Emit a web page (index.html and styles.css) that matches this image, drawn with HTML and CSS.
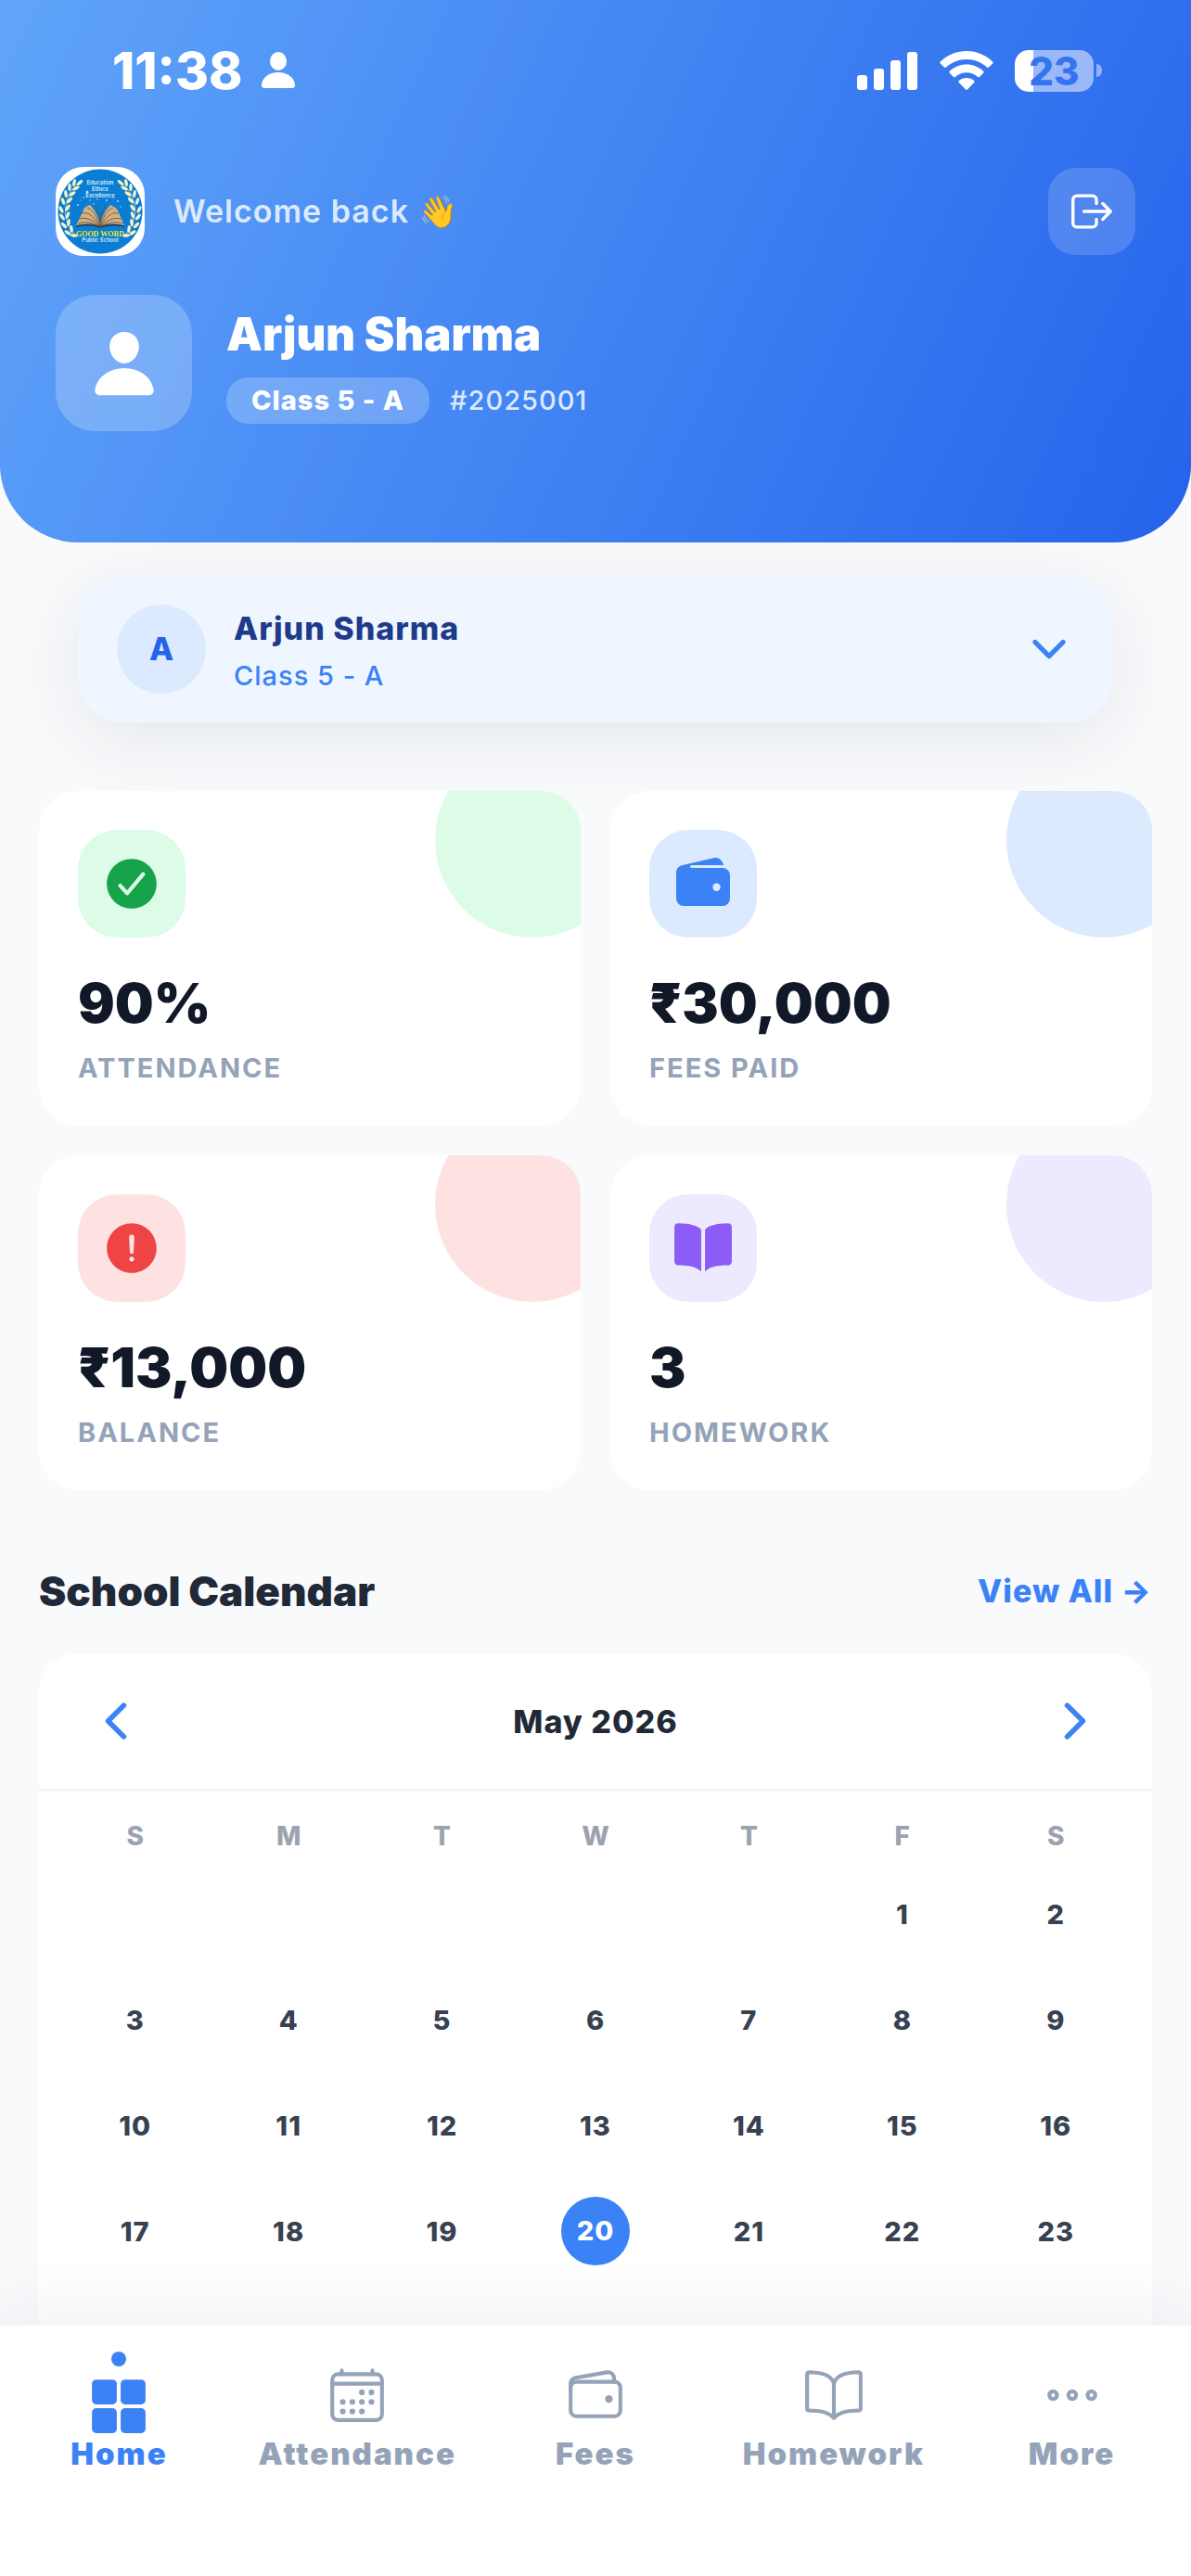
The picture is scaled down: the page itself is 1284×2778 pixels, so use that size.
FILE: index.html
```html
<!DOCTYPE html>
<html lang="en">
<head>
<meta charset="utf-8">
<meta name="viewport" content="width=device-width, initial-scale=1">
<title>Good Word Public School</title>
<link rel="stylesheet" href="styles.css">
</head>
<body>
<div class="app">
  <main class="content">
    <header class="hero">
      <div class="status">
        <div class="status-side">
          <time class="clock">11:38</time>
          <svg class="status-person" viewBox="0 0 36 40" aria-hidden="true"><ellipse cx="18" cy="10" rx="9" ry="10"/><path d="M0 36c0-7 7-14 18-14s18 7 18 14c0 2-1 3-3 3H3c-2 0-3-1-3-3z"/></svg>
        </div>
        <div class="status-side status-icons">
          <svg class="signal" viewBox="0 0 66 42" aria-hidden="true"><rect x="0" y="26" width="11" height="16" rx="3"/><rect x="18" y="19" width="11" height="23" rx="3"/><rect x="36" y="10" width="11" height="32" rx="3"/><rect x="54" y="1" width="11" height="41" rx="3"/></svg>
          <svg class="wifi" viewBox="0 0 58 42" aria-hidden="true"><path d="M29 0C18 0 8 4.500 .8 11.500c-.6.600-.6 1.400 0 2L5 17.600c.6.600 1.400.600 2 0C13 12 20.500 9 29 9s16 3 22 8.600c.6.600 1.400.600 2 0l4.200-4.100c.6-.6.600-1.400 0-2C50 4.500 40 0 29 0z"/><path d="M29 14.500c-7 0-13.400 2.700-18.200 7.200-.6.600-.6 1.400 0 2l4.200 4.200c.6.500 1.300.5 1.900 0 3.300-3 7.500-4.700 12.100-4.700s8.800 1.700 12.100 4.700c.6.500 1.300.5 1.900 0l4.200-4.200c.6-.6.600-1.400 0-2-4.800-4.500-11.200-7.200-18.200-7.200z"/><path d="M29 29c-3.100 0-6 1.100-8.200 3-.6.500-.6 1.400 0 2l7.200 7.400c.6.600 1.400.6 2 0l7.200-7.400c.6-.6.600-1.500 0-2C35 30.100 32.100 29 29 29z"/></svg>
          <div class="battery"><span class="battery-body">23</span><span class="battery-cap"></span></div>
        </div>
      </div>

      <div class="greeting">
        <svg class="logo" viewBox="0 0 96 96" role="img" aria-label="Good Word Public School crest">
          <defs>
            <ellipse id="leaf" rx="4" ry="1.700"/>
            <g id="branch">
              <path d="M28 15C10 26 2 56 23 75" fill="none" stroke="#f4eebd" stroke-width=".7"/>
              <g fill="#f8f2c4">
                <use href="#leaf" transform="translate(26 17) rotate(-42)"/>
                <use href="#leaf" transform="translate(20 17) rotate(-78)"/>
                <use href="#leaf" transform="translate(22 23) rotate(-28)"/>
                <use href="#leaf" transform="translate(15 22) rotate(-88)"/>
                <use href="#leaf" transform="translate(18 29) rotate(-36)"/>
                <use href="#leaf" transform="translate(11 29) rotate(-98)"/>
                <use href="#leaf" transform="translate(15 36) rotate(-46)"/>
                <use href="#leaf" transform="translate(8 37) rotate(-108)"/>
                <use href="#leaf" transform="translate(13 44) rotate(-58)"/>
                <use href="#leaf" transform="translate(6 46) rotate(-118)"/>
                <use href="#leaf" transform="translate(13 52) rotate(-70)"/>
                <use href="#leaf" transform="translate(7 54) rotate(52)"/>
                <use href="#leaf" transform="translate(14 60) rotate(-82)"/>
                <use href="#leaf" transform="translate(9 63) rotate(44)"/>
                <use href="#leaf" transform="translate(17 67) rotate(-96)"/>
                <use href="#leaf" transform="translate(13 71) rotate(34)"/>
                <use href="#leaf" transform="translate(20 74) rotate(5)"/>
              </g>
            </g>
          </defs>
          <rect width="96" height="96" fill="#fff"/>
          <circle cx="48" cy="48" r="45.500" fill="#0b7dd3"/>
          <use href="#branch"/>
          <use href="#branch" transform="translate(96 0) scale(-1 1)"/>
          <g fill="#bfe6ff"><circle cx="34" cy="27" r="1.300"/><circle cx="30" cy="33" r=".8"/><circle cx="24" cy="41" r=".9"/><circle cx="37" cy="36" r=".7"/><circle cx="45" cy="35" r=".7"/><circle cx="55" cy="36" r=".9"/><circle cx="62" cy="33" r=".7"/><circle cx="67" cy="37" r=".9"/><circle cx="27" cy="36" r=".6"/><circle cx="41" cy="40" r=".8"/><circle cx="70" cy="43" r=".7"/></g>
          <g class="logo-motto"><text x="48" y="19">Education</text><text x="48" y="26">Ethics</text><text x="48" y="33">Excellence</text></g>
          <path d="M48 65C40 60 31 61 22 63l7-14c1-5 4-7 8-8 5 5 9 12 11 22 2-10 6-17 11-22 5 2 7 4 9 8l6 14c-9-2-18-3-26 2z" fill="#d2b184"/>
          <path d="M48 64C41 53 35 48 28 50M48 64C40 57 33 54 26 56M48 64C41 61 33 58 24 61M48 64C44 52 40 46 34 44M48 64C55 53 61 48 68 50M48 64C56 57 63 54 71 56M48 64C55 61 63 58 73 61M48 64C52 52 56 46 62 44M48 60C48 52 45 46 42 41M48 60C49 50 52 45 54 41" fill="none" stroke="#6b4b2c" stroke-width=".8"/>
          <path d="M22 64c9-2 18-2 26 1 8-3 17-3 26-1" fill="none" stroke="#3b2a1c" stroke-width="1.200"/>
          <text class="logo-name" x="48" y="75">GOOD WORD</text>
          <text class="logo-sub" x="48" y="81">Public School</text>
        </svg>
        <p class="welcome">Welcome back 👋</p>
        <button class="logout" type="button" aria-label="Log out">
          <svg class="icon-54 line" viewBox="0 0 512 512"><path d="M304 336v40a40 40 0 01-40 40H104a40 40 0 01-40-40V136a40 40 0 0140-40h160a40 40 0 0140 40v40M368 336l80-80-80-80M176 256h256"/></svg>
        </button>
      </div>

      <div class="profile">
        <div class="profile-photo">
          <svg class="icon-78" viewBox="0 0 512 512" fill="currentColor" aria-hidden="true"><path d="M332.640 64.580C313.180 43.570 286 32 256 32c-30.160 0-57.430 11.500-76.800 32.380-19.580 21.110-29.120 49.800-26.880 80.780C156.760 206.280 203.270 256 256 256s99.160-49.710 103.670-110.820c2.270-30.700-7.330-59.330-27.030-80.600zM432 480H80a31 31 0 01-24.200-11.130c-6.500-7.770-9.120-18.380-7.180-29.110C57.060 392.940 83.400 353.610 124.800 326c36.780-24.510 83.370-38 131.200-38s94.420 13.500 131.200 38c41.400 27.600 67.740 66.930 76.180 113.750 1.940 10.730-.68 21.340-7.180 29.110A31 31 0 01432 480z"/></svg>
        </div>
        <div class="profile-text">
          <h1 class="profile-name">Arjun Sharma</h1>
          <div class="profile-meta"><span class="chip">Class 5 - A</span><span class="roll">#2025001</span></div>
        </div>
      </div>
    </header>

    <button class="switcher" type="button">
      <span class="switcher-initial">A</span>
      <span class="switcher-text"><span class="switcher-name">Arjun Sharma</span><span class="switcher-class">Class 5 - A</span></span>
      <svg class="icon-54 bold-line" viewBox="0 0 512 512" aria-hidden="true"><path d="M112 184l144 144 144-144"/></svg>
    </button>

    <section class="stats" aria-label="Summary">
      <article class="stat green">
        <div class="stat-icon"><svg class="icon-66" viewBox="0 0 512 512" fill="currentColor" aria-hidden="true"><path d="M256 48C141.310 48 48 141.310 48 256s93.310 208 208 208 208-93.310 208-208S370.690 48 256 48zm108.250 138.290l-134.400 160a16 16 0 01-12 5.710h-.27a16 16 0 01-11.890-5.300l-57.600-64a16 16 0 1123.780-21.400l45.290 50.320 122.590-145.910a16 16 0 0124.500 20.580z"/></svg></div>
        <p class="stat-value">90%</p>
        <p class="stat-label">ATTENDANCE</p>
      </article>
      <article class="stat blue">
        <div class="stat-icon"><svg class="icon-66" viewBox="0 0 66 66" fill="currentColor" aria-hidden="true"><path fill-rule="evenodd" d="M4 21c0-4 3-7.500 7-8L45.500 5.100C50 4.400 54 8 55 13H20.500a1.500 1.500 0 000 3H54a8 8 0 018 8v25a8 8 0 01-8 8H12a8 8 0 01-8-8zM47.500 32.500a4.200 4.200 0 100 8.400 4.200 4.200 0 000-8.400z"/></svg></div>
        <p class="stat-value">₹30,000</p>
        <p class="stat-label">FEES PAID</p>
      </article>
      <article class="stat red">
        <div class="stat-icon"><svg class="icon-66" viewBox="0 0 512 512" fill="currentColor" aria-hidden="true"><path d="M256 48C141.310 48 48 141.310 48 256s93.310 208 208 208 208-93.310 208-208S370.690 48 256 48zm0 319.910a20 20 0 1120-20 20 20 0 01-20 20zm21.720-201.150l-5.740 122a16 16 0 01-32 0l-5.740-121.940v-.05a21.740 21.740 0 1143.440 0z"/></svg></div>
        <p class="stat-value">₹13,000</p>
        <p class="stat-label">BALANCE</p>
      </article>
      <article class="stat violet">
        <div class="stat-icon"><svg class="icon-66" viewBox="0 0 512 512" fill="currentColor" aria-hidden="true"><path d="M202.240 74C166.110 56.750 115.610 48.300 48 48a31.360 31.360 0 00-17.920 5.330A32 32 0 0016 79.900V366c0 19.340 13.760 33.930 32 33.930 71.070 0 142.360 6.640 185.060 47a4.110 4.110 0 006.940-3V106.820a15.890 15.890 0 00-5.460-12A143 143 0 00202.240 74zM481.920 53.300A31.330 31.330 0 00464 48c-67.610.3-118.110 8.710-154.240 26a143.310 143.310 0 00-32.310 20.780 15.930 15.930 0 00-5.450 12v337.130a3.930 3.930 0 006.680 2.810c25.670-25.500 70.720-46.820 185.360-46.810a32 32 0 0032-32v-288a32 32 0 00-14.120-26.610z"/></svg></div>
        <p class="stat-value">3</p>
        <p class="stat-label">HOMEWORK</p>
      </article>
    </section>

    <div class="section-head">
      <h2 class="section-title">School Calendar</h2>
      <a class="view-all" href="#calendar">View All →</a>
    </div>

    <section class="calendar" id="calendar" aria-label="School calendar">
      <div class="calendar-head">
        <button class="month-step" type="button" aria-label="Previous month"><svg class="icon-60 bold-line" viewBox="0 0 512 512"><path d="M328 112L184 256l144 144"/></svg></button>
        <h3 class="month">May 2026</h3>
        <button class="month-step" type="button" aria-label="Next month"><svg class="icon-60 bold-line" viewBox="0 0 512 512"><path d="M184 112l144 144-144 144"/></svg></button>
      </div>
      <table class="days">
        <thead><tr><th scope="col">S</th><th scope="col">M</th><th scope="col">T</th><th scope="col">W</th><th scope="col">T</th><th scope="col">F</th><th scope="col">S</th></tr></thead>
        <tbody>
          <tr><td></td><td></td><td></td><td></td><td></td><td>1</td><td>2</td></tr>
          <tr><td>3</td><td>4</td><td>5</td><td>6</td><td>7</td><td>8</td><td>9</td></tr>
          <tr><td>10</td><td>11</td><td>12</td><td>13</td><td>14</td><td>15</td><td>16</td></tr>
          <tr><td>17</td><td>18</td><td>19</td><td><span class="today">20</span></td><td>21</td><td>22</td><td>23</td></tr>
          <tr><td></td><td></td><td></td><td></td><td></td><td></td><td></td></tr>
        </tbody>
      </table>
    </section>
  </main>

  <nav class="tabs" aria-label="Main">
    <a class="tab active" href="#home" aria-current="page">
      <span class="tab-dot"></span>
      <svg class="icon-66" viewBox="0 0 512 512" fill="currentColor" aria-hidden="true"><rect x="32" y="32" width="208" height="208" rx="36"/><rect x="272" y="32" width="208" height="208" rx="36"/><rect x="32" y="272" width="208" height="208" rx="36"/><rect x="272" y="272" width="208" height="208" rx="36"/></svg>
      <span>Home</span>
    </a>
    <a class="tab" href="#attendance">
      <svg class="icon-66 line" viewBox="0 0 512 512" aria-hidden="true"><rect x="48" y="80" width="416" height="384" rx="48"/><path d="M128 48v32M384 48v32M464 160H48"/><g fill="currentColor" stroke="none"><circle cx="296" cy="232" r="24"/><circle cx="376" cy="232" r="24"/><circle cx="136" cy="312" r="24"/><circle cx="216" cy="312" r="24"/><circle cx="296" cy="312" r="24"/><circle cx="376" cy="312" r="24"/><circle cx="136" cy="392" r="24"/><circle cx="216" cy="392" r="24"/><circle cx="296" cy="392" r="24"/></g></svg>
      <span>Attendance</span>
    </a>
    <a class="tab" href="#fees">
      <svg class="icon-66 line" viewBox="0 0 512 512" aria-hidden="true"><rect x="48" y="144" width="416" height="288" rx="48"/><path d="M411.360 144v-30A50 50 0 00352 64.900L88.640 109.850A50 50 0 0048 159v49"/><circle cx="368" cy="288" r="32" fill="currentColor" stroke="none"/></svg>
      <span>Fees</span>
    </a>
    <a class="tab" href="#homework">
      <svg class="icon-66 line" viewBox="0 0 512 512" aria-hidden="true"><path d="M256 160c16-63.160 76.430-95.410 208-96a15.940 15.940 0 0116 16v288a16 16 0 01-16 16c-128 0-177.450 25.810-208 64-30.370-38-80-64-208-64-9.880 0-16-8.050-16-17.930V80a15.940 15.940 0 0116-16c131.570.590 192 32.840 208 96zM256 160v288"/></svg>
      <span>Homework</span>
    </a>
    <a class="tab" href="#more">
      <svg class="icon-66 line" viewBox="0 0 512 512" aria-hidden="true"><circle cx="96" cy="256" r="32"/><circle cx="256" cy="256" r="32"/><circle cx="416" cy="256" r="32"/></svg>
      <span>More</span>
    </a>
  </nav>
</div>
</body>
</html>
```
FILE: styles.css
```css
* { box-sizing: border-box; }

body {
  margin: 0;
  background: #f9fafc;
  color: #111827;
  font-family: Inter, "Liberation Sans", sans-serif;
}

h1, h2, h3, p { margin: 0; }
button { border: 0; padding: 0; background: none; font: inherit; color: inherit; cursor: pointer; }
a { color: inherit; text-decoration: none; }
svg { display: block; flex: none; }

.icon-54 { width: 54px; height: 54px; }
.icon-60 { width: 60px; height: 60px; }
.icon-66 { width: 66px; height: 66px; }
.icon-78 { width: 78px; height: 78px; }

.line, .bold-line {
  fill: none;
  stroke: currentColor;
  stroke-width: 32;
  stroke-linecap: round;
  stroke-linejoin: round;
}
.bold-line { stroke-width: 48; }

.app { display: flex; flex-direction: column; height: 100vh; }

.content {
  flex: 1;
  min-height: 0;
  overflow-y: auto;
  scrollbar-width: none;
}

/* Header */
.hero {
  position: relative;
  z-index: 1;
  padding: 48px 60px 120px;
  border-radius: 0 0 84px 84px;
  background: linear-gradient(114deg, #60a5fa, #2563eb);
  color: #fff;
}

.status {
  display: flex;
  align-items: center;
  justify-content: space-between;
  height: 56px;
  padding: 0 36px 0 61px;
}
.status-side { display: flex; align-items: center; gap: 20px; }
.status-icons { gap: 23px; }
.status svg { fill: currentColor; }
.clock { font-size: 55px; font-weight: 800; line-height: 56px; }
.status-person { width: 36px; height: 40px; }
.signal { width: 66px; height: 42px; }
.wifi { width: 58px; height: 42px; }
.battery { display: flex; align-items: center; gap: 3px; }
.battery-body {
  width: 85px;
  border-radius: 15px;
  background: linear-gradient(90deg, #fff 20px, #9bb9f8 20px);
  color: #3574f0;
  font-size: 42px;
  font-weight: 800;
  line-height: 45px;
  text-align: center;
}
.battery-cap { width: 6px; height: 14px; border-radius: 0 6px 6px 0; background: #8fb1f7; }

.greeting { display: flex; align-items: center; gap: 31px; margin-top: 76px; }
.logo { width: 96px; height: 96px; border-radius: 30px; }
.logo-motto { fill: #d9eefb; font-size: 6px; font-weight: 600; text-anchor: middle; }
.logo-name { fill: #e6ea2a; font: 700 8px "Liberation Serif", serif; text-anchor: middle; }
.logo-sub { fill: #cfe6f8; font-size: 6px; font-weight: 600; text-anchor: middle; }
.welcome { flex: 1; color: #dbeafe; font-size: 34px; font-weight: 600; line-height: 48px; letter-spacing: 1px; }
.logout { padding: 20px; border-radius: 30px; background: rgba(255, 255, 255, .16); }

.profile { display: flex; align-items: center; gap: 37px; margin-top: 42px; }
.profile-photo {
  display: grid;
  place-items: center;
  width: 147px;
  height: 147px;
  border-radius: 42px;
  background: rgba(255, 255, 255, .22);
}
.profile-text { padding-top: 4px; }
.profile-name { font-size: 49px; font-weight: 900; line-height: 60px; }
.profile-meta { display: flex; align-items: center; gap: 22px; margin-top: 16px; font-size: 29px; letter-spacing: 1px; }
.chip { padding: 0 27px; border-radius: 24px; background: rgba(255, 255, 255, .22); font-weight: 800; line-height: 50px; }
.roll { color: #dbeafe; font-weight: 500; }

/* Student switcher */
.switcher {
  display: flex;
  align-items: center;
  gap: 30px;
  width: calc(100% - 168px);
  margin: 36px 84px 74px;
  padding: 31px 42px;
  border-radius: 48px;
  background: #eff6ff;
  box-shadow: 0 18px 80px rgba(15, 40, 60, .09);
  color: #3b82f6;
  text-align: left;
}
.switcher-initial {
  width: 96px;
  border-radius: 50%;
  background: #dbeafe;
  color: #2563eb;
  font-size: 34px;
  font-weight: 800;
  line-height: 96px;
  text-align: center;
}
.switcher-text { display: flex; flex: 1; flex-direction: column; gap: 12px; padding-top: 3px; }
.switcher-name { color: #1e3a8a; font-size: 34px; font-weight: 800; line-height: 42px; letter-spacing: 1px; }
.switcher-class { font-size: 29px; font-weight: 500; line-height: 36px; letter-spacing: 1px; }

/* Stat cards */
.stats { display: grid; grid-template-columns: 1fr 1fr; gap: 32px; padding: 0 42px; }
.stat {
  position: relative;
  overflow: hidden;
  padding: 42px 42px 44px;
  border-radius: 42px;
  background: #fff;
}
.stat::after {
  content: "";
  position: absolute;
  top: -52px;
  right: -53px;
  width: 210px;
  height: 210px;
  border-radius: 50%;
  background: var(--tint);
}
.stat-icon {
  display: grid;
  place-items: center;
  width: 116px;
  height: 116px;
  border-radius: 42px;
  background: var(--tint);
  color: var(--tone);
}
.stat-value { margin-top: 37px; font-size: 59px; font-weight: 900; line-height: 68px; }
.stat-label { margin-top: 18px; color: #94a3b8; font-size: 29px; font-weight: 700; line-height: 36px; letter-spacing: 2px; }
.green { --tint: #dcfce7; --tone: #16a34a; }
.blue { --tint: #dbeafe; --tone: #3b82f6; }
.red { --tint: #fee2e2; --tone: #ef4444; }
.violet { --tint: #ede9fe; --tone: #8b5cf6; }

/* Calendar */
.section-head {
  display: flex;
  align-items: center;
  justify-content: space-between;
  margin: 82px 42px 40px;
  line-height: 54px;
}
.section-title { color: #1f2937; font-size: 44px; font-weight: 900; }
.view-all { color: #3b82f6; font-size: 34px; font-weight: 800; letter-spacing: 1px; }

.calendar { margin: 0 42px; border-radius: 42px; background: #fff; }
.calendar-head {
  display: flex;
  align-items: center;
  justify-content: space-between;
  padding: 43px 53px;
  border-bottom: 3px solid #f3f4f6;
}
.month-step { color: #3b82f6; }
.month { color: #1f2937; font-size: 34px; font-weight: 800; letter-spacing: 1px; }

.days { width: 100%; padding: 21px 21px 0; border-spacing: 0; table-layout: fixed; }
.days th { height: 54px; padding: 0; color: #9ca3af; font-size: 28px; font-weight: 800; }
.days td { height: 114px; padding: 0; color: #374151; font-size: 29px; font-weight: 800; letter-spacing: 1px; text-align: center; }
.today {
  display: block;
  width: 74px;
  margin: 0 auto;
  border-radius: 50%;
  background: #3b82f6;
  color: #fff;
  line-height: 74px;
}

/* Bottom tabs */
.tabs {
  position: relative;
  z-index: 2;
  display: grid;
  grid-template-columns: repeat(5, 1fr);
  height: 270px;
  padding-top: 28px;
  background: #fff;
  box-shadow: 0 -12px 72px rgba(15, 40, 60, .07);
}
.tab {
  display: flex;
  flex-direction: column;
  align-items: center;
  gap: 12px;
  padding-top: 14px;
  color: #94a3b8;
  font-size: 33px;
  font-weight: 900;
  line-height: 36px;
  letter-spacing: 2px;
}
.active { gap: 0; padding-top: 0; color: #3b82f6; }
.tab-dot { width: 16px; height: 16px; margin-bottom: 10px; border-radius: 50%; background: currentColor; }
```
